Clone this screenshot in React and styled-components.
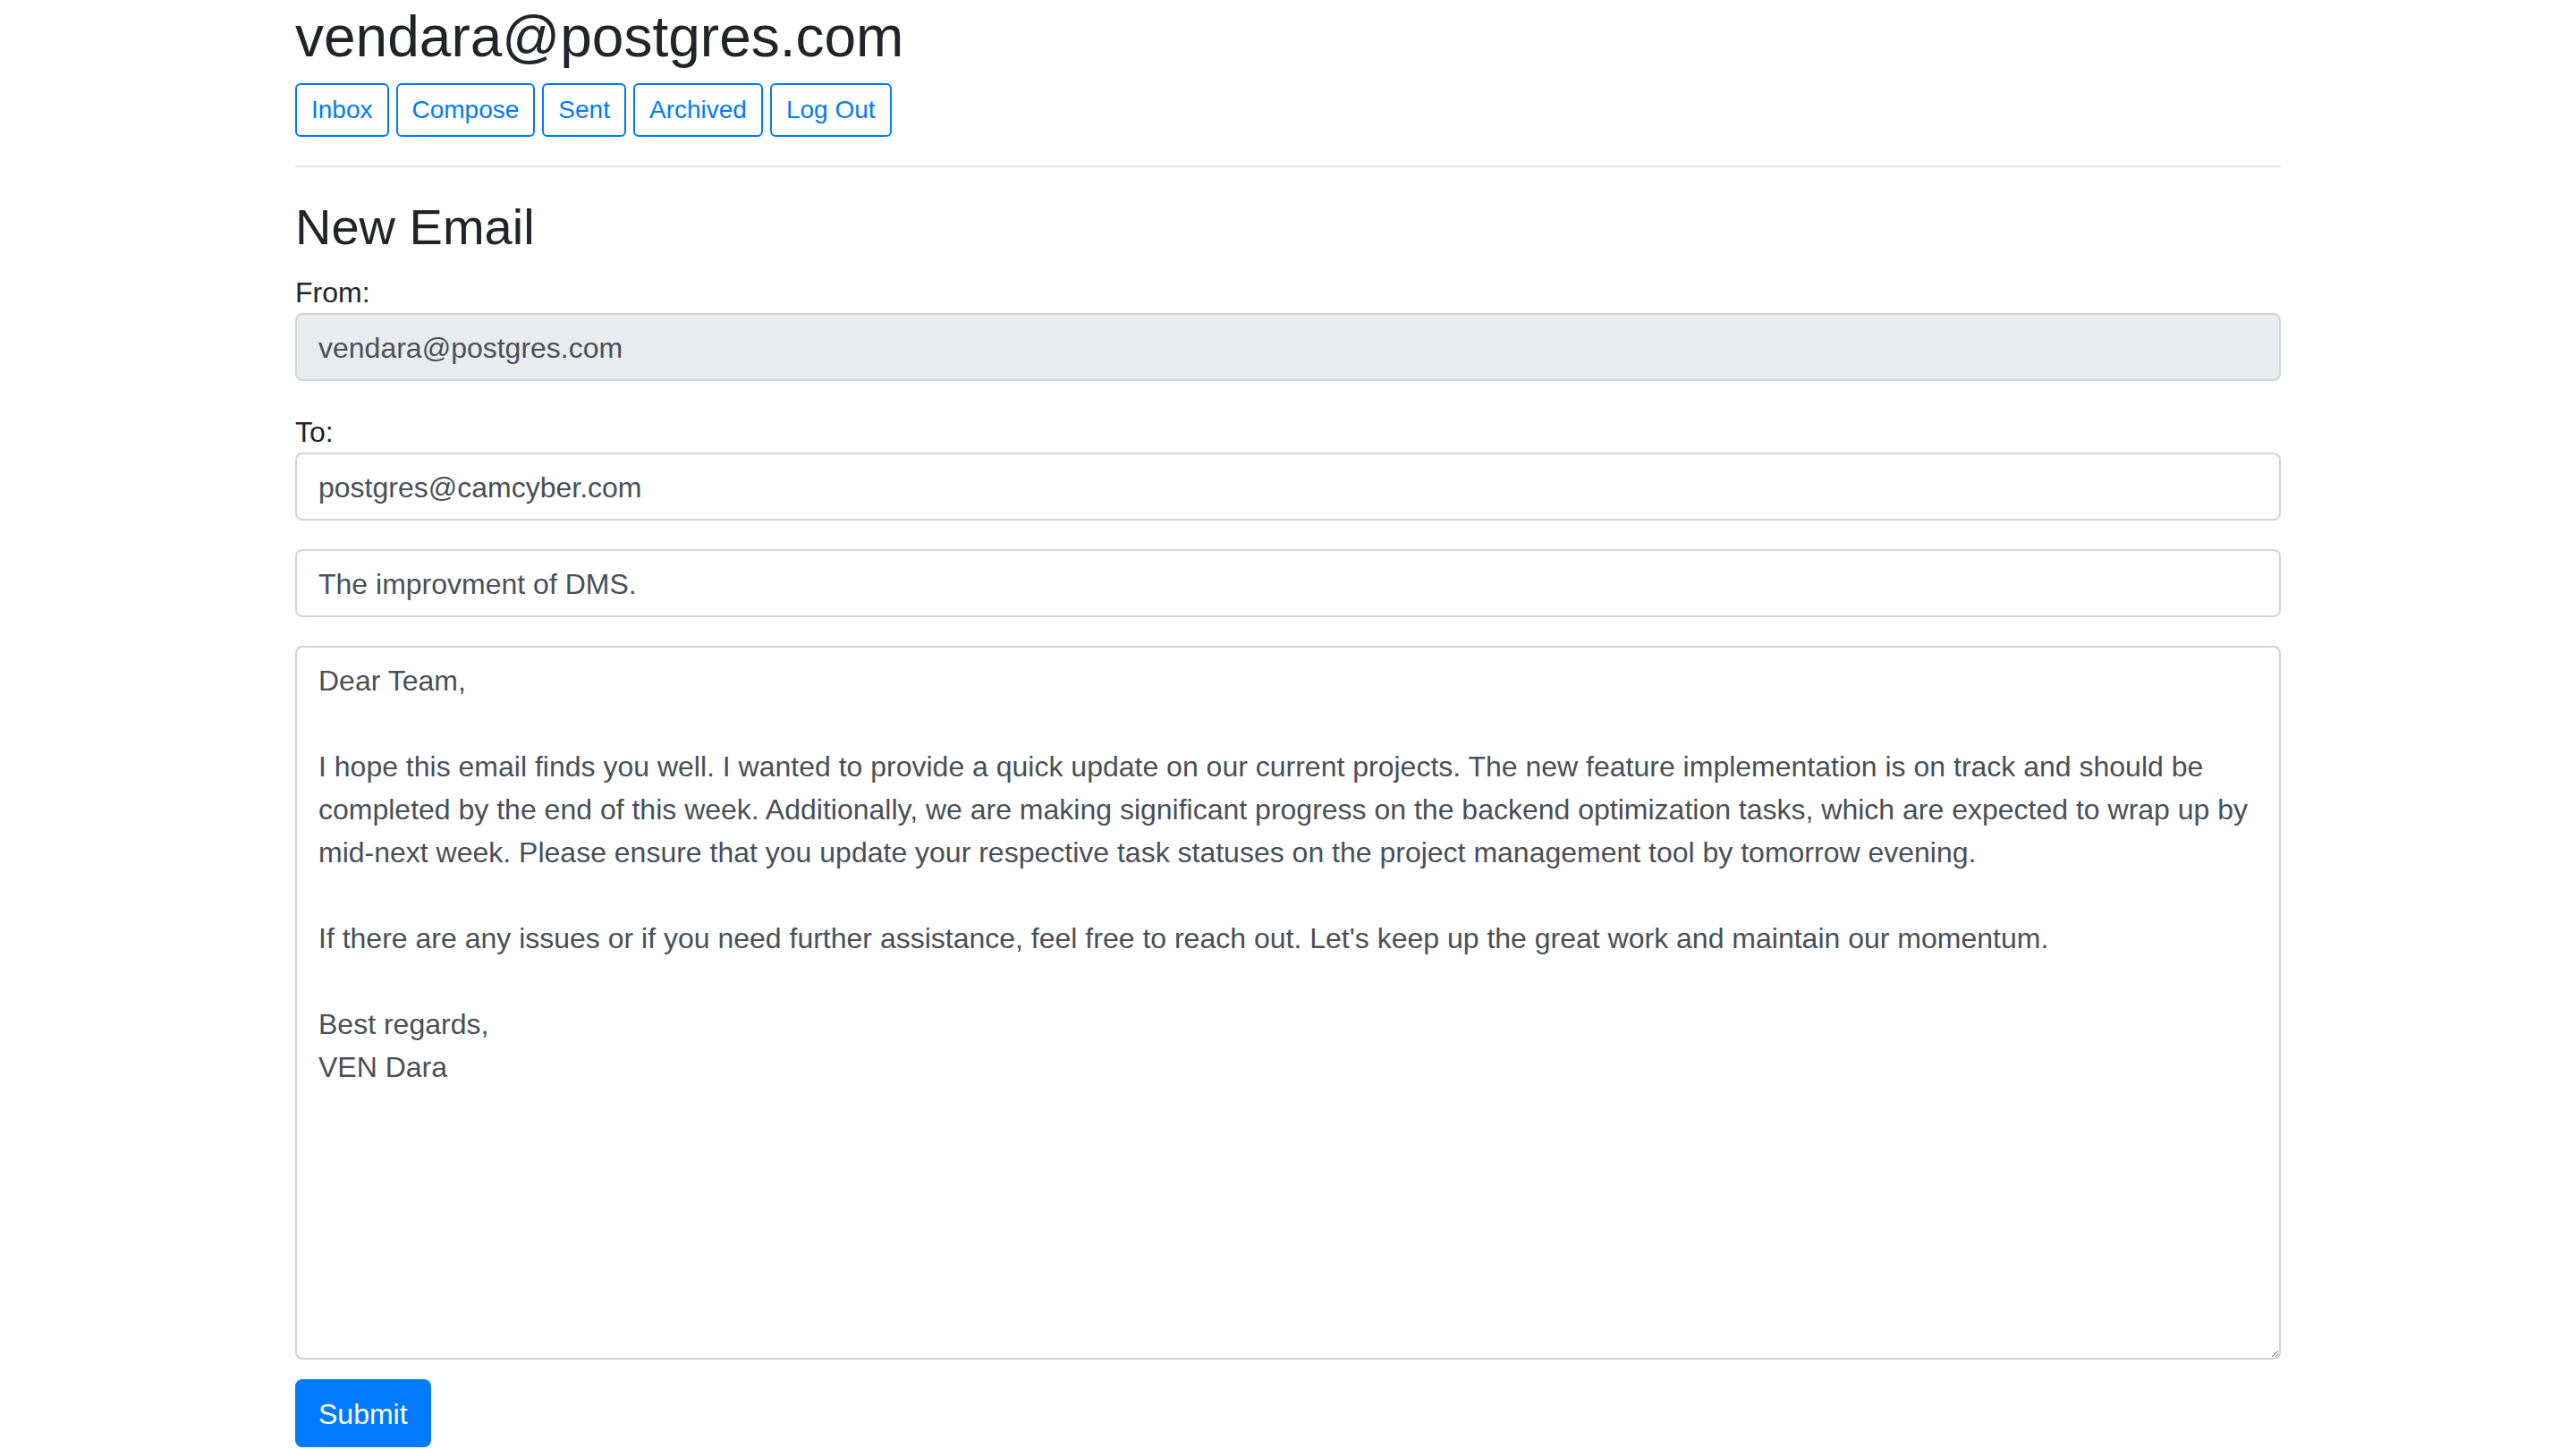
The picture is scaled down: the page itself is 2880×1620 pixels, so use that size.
import React from 'react';
import styled, { createGlobalStyle } from 'styled-components';

const GlobalStyle = createGlobalStyle`
  * { box-sizing: border-box; }
  body {
    margin: 0; background: #fff; color: #212529;
    font-family: "Liberation Sans", Arial, sans-serif; font-size: 32px; line-height: 1.5;
  }
`;

const Container = styled.div`
  max-width: 2280px; margin: 0 auto; padding: 0 30px;
`;
const Title = styled.h2`
  margin: 0 0 16px; padding-top: 6px; font-size: 64px; font-weight: 400; line-height: 70.8px; color: #212529;
`;
const Nav = styled.div`
  display: flex; gap: 8px;
`;
const NavButton = styled.button`
  font-family: inherit; font-size: 28px; line-height: 42px; padding: 7px 16px;
  background: #fff; color: #007bff; border: 2px solid #007bff; border-radius: 6px; cursor: pointer;
  &:hover { background: #007bff; color: #fff; }
`;
const Rule = styled.hr`
  margin: 32px 0; border: 0; border-top: 2px solid rgba(0, 0, 0, 0.1);
`;
const Heading = styled.h3`
  margin: 0 0 16px; padding-top: 3px; font-size: 56px; font-weight: 400; line-height: 64.2px; color: #212529;
`;
const Group = styled.div`
  margin-bottom: ${p => p.last ? '22px' : '32px'};
`;
const Label = styled.label`
  display: block; margin: 0; padding-top: 2px; font-size: 32px; line-height: 46px; color: #212529;
`;
const Field = styled.input`
  display: block; width: 100%; height: 76px; padding: 13px 24px 11px;
  font-family: inherit; font-size: 32px; line-height: 48px; color: #495057;
  background: ${p => p.readOnly ? '#e9ecef' : '#fff'};
  border: 2px solid #ced4da; border-radius: 8px; outline: none;
`;
const Body = styled.textarea`
  display: block; width: 100%; height: 798px; padding: 13px 24px 11px; margin: 0;
  font-family: inherit; font-size: 32px; line-height: 48px; color: #495057;
  background: #fff; border: 2px solid #ced4da; border-radius: 8px; outline: none; resize: vertical;
`;
const Submit = styled.button`
  font-family: inherit; font-size: 32px; line-height: 48px; padding: 13px 24px 11px;
  background: #007bff; color: #fff; border: 2px solid #007bff; border-radius: 8px; cursor: pointer;
`;

const message = `Dear Team,

I hope this email finds you well. I wanted to provide a quick update on our current projects. The new feature implementation is on track and should be completed by the end of this week. Additionally, we are making significant progress on the backend optimization tasks, which are expected to wrap up by mid-next week. Please ensure that you update your respective task statuses on the project management tool by tomorrow evening.

If there are any issues or if you need further assistance, feel free to reach out. Let's keep up the great work and maintain our momentum.

Best regards,
VEN Dara`;

const links = ['Inbox', 'Compose', 'Sent', 'Archived', 'Log Out'];

export default function App() {
  return (
    <>
      <GlobalStyle />
      <Container>
        <Title>vendara@postgres.com</Title>
        <Nav>
          {links.map(l => <NavButton key={l}>{l}</NavButton>)}
        </Nav>
        <Rule />
        <Heading>New Email</Heading>
        <form onSubmit={e => e.preventDefault()}>
          <Group>
            <Label htmlFor="from">From:</Label>
            <Field id="from" readOnly value="vendara@postgres.com" />
          </Group>
          <Group>
            <Label htmlFor="to">To:</Label>
            <Field id="to" defaultValue="postgres@camcyber.com" />
          </Group>
          <Group>
            <Field defaultValue="The improvment of DMS." />
          </Group>
          <Group last>
            <Body defaultValue={message} />
          </Group>
          <Submit type="submit">Submit</Submit>
        </form>
      </Container>
    </>
  );
}
